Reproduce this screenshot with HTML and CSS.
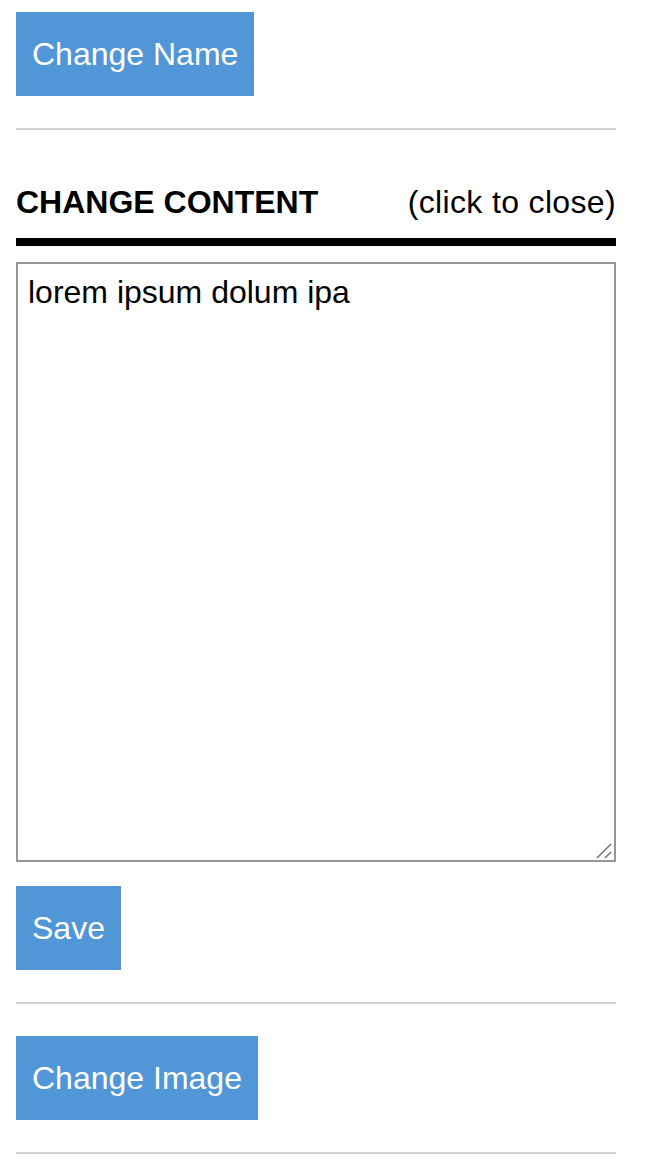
FILE: index.html
```html
<!DOCTYPE html>
<html>
<head>
<meta charset="utf-8">
<link rel="stylesheet" href="styles.css">
</head>
<body>
<div class="page">
  <button class="btn">Change Name</button>
  <div class="rule"></div>
  <div class="section-head">
    <span class="section-title">CHANGE CONTENT</span>
    <span class="section-close">(click to close)</span>
  </div>
  <div class="editor-wrap">
    <textarea class="editor">lorem ipsum dolum ipa</textarea>
    <svg class="grip" width="20" height="20" viewBox="0 0 20 20">
      <line x1="3" y1="18" x2="17" y2="4" stroke="#6e6e6e" stroke-width="1.4"/>
      <line x1="11" y1="18" x2="17" y2="12" stroke="#6e6e6e" stroke-width="1.4"/>
    </svg>
  </div>
  <button class="btn btn-save">Save</button>
  <div class="rule"></div>
  <button class="btn btn-image">Change Image</button>
  <div class="rule"></div>
</div>
</body>
</html>
```
FILE: styles.css
```css
html, body {
  margin: 0;
  padding: 0;
  background: #ffffff;
}
.page {
  width: 600px;
  padding: 12px 16px 0 16px;
  display: flex;
  flex-direction: column;
  align-items: flex-start;
  font-family: "Liberation Sans", Arial, sans-serif;
}
.btn {
  background: #5196d6;
  color: #ffffff;
  border: none;
  border-radius: 0;
  font-family: "Liberation Sans", Arial, sans-serif;
  font-size: 32px;
  line-height: 36px;
  padding: 24px 16px;
  margin: 0;
  cursor: pointer;
}
.rule {
  width: 600px;
  height: 2px;
  background: #d3d3d3;
  margin-top: 32px;
}
.btn-image {
  margin-top: 32px;
}
.btn-save {
  margin-top: 24px;
}
.section-head {
  width: 600px;
  margin-top: 54px;
  padding-bottom: 18px;
  border-bottom: 8px solid #000000;
  display: flex;
  justify-content: space-between;
  align-items: baseline;
  font-size: 32px;
  line-height: 36px;
  color: #000000;
}
.section-title {
  font-weight: bold;
}
.section-close {
  font-weight: normal;
  letter-spacing: 0.35px;
}
.editor-wrap {
  position: relative;
  width: 600px;
  height: 600px;
  margin-top: 16px;
}
.editor {
  display: block;
  box-sizing: border-box;
  width: 600px;
  height: 600px;
  margin: 0;
  border: 2px solid #959595;
  padding: 10px;
  font-family: "Liberation Sans", Arial, sans-serif;
  font-size: 32px;
  line-height: 36px;
  color: #000000;
  resize: none;
}
.grip {
  position: absolute;
  right: 2px;
  bottom: 2px;
  pointer-events: none;
}
```
